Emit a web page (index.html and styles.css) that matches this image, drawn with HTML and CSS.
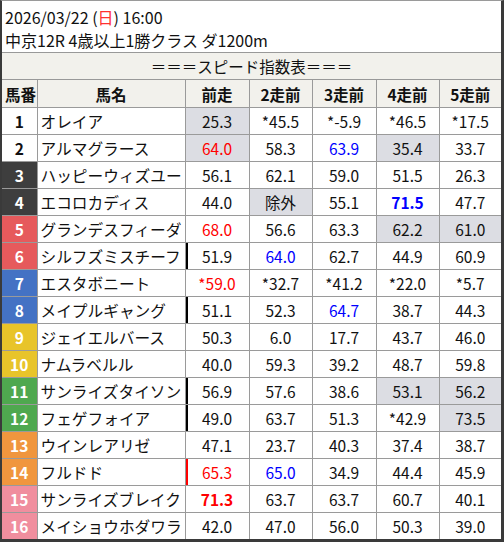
FILE: index.html
```html
<!DOCTYPE html>
<html lang="ja">
<head>
<meta charset="utf-8">
<link rel="stylesheet" href="styles.css">
</head>
<body>
<div class="frame">
  <div class="info">
    <div class="line">2026/03/22 (<span class="sun">日</span>) 16:00</div>
    <div class="line">中京12R 4歳以上1勝クラス ダ1200m</div>
  </div>
  <div class="title">＝＝＝スピード指数表＝＝＝</div>
  <table class="tbl">
    <colgroup>
      <col class="c-no"><col class="c-name"><col class="c-v0"><col class="c-v1"><col class="c-v2"><col class="c-v3"><col class="c-v4">
    </colgroup>
    <thead>
      <tr><th class="h-no">馬番</th><th>馬名</th><th>前走</th><th>2走前</th><th>3走前</th><th>4走前</th><th>5走前</th></tr>
    </thead>
    <tbody>
      <tr><td class="no w1">1</td><td class="nm">オレイア</td><td class="g">25.3</td><td>*45.5</td><td>*-5.9</td><td>*46.5</td><td>*17.5</td></tr>
      <tr><td class="no w2">2</td><td class="nm">アルマグラース</td><td class="g red">64.0</td><td>58.3</td><td class="blue">63.9</td><td class="g">35.4</td><td>33.7</td></tr>
      <tr><td class="no k">3</td><td class="nm">ハッピーウィズユー</td><td>56.1</td><td>62.1</td><td>59.0</td><td>51.5</td><td>26.3</td></tr>
      <tr><td class="no k">4</td><td class="nm">エコロカディス</td><td>44.0</td><td class="g">除外</td><td>55.1</td><td class="blue b">71.5</td><td>47.7</td></tr>
      <tr><td class="no r">5</td><td class="nm">グランデスフィーダ</td><td class="red">68.0</td><td>56.6</td><td>63.3</td><td class="g">62.2</td><td class="g">61.0</td></tr>
      <tr><td class="no r">6</td><td class="nm">シルフズミスチーフ</td><td class="bar">51.9</td><td class="blue">64.0</td><td>62.7</td><td>44.9</td><td>60.9</td></tr>
      <tr><td class="no bl">7</td><td class="nm">エスタボニート</td><td class="red">*59.0</td><td>*32.7</td><td>*41.2</td><td>*22.0</td><td>*5.7</td></tr>
      <tr><td class="no bl">8</td><td class="nm">メイプルギャング</td><td class="bar">51.1</td><td>52.3</td><td class="blue">64.7</td><td>38.7</td><td>44.3</td></tr>
      <tr><td class="no y">9</td><td class="nm">ジェイエルバース</td><td>50.3</td><td>6.0</td><td>17.7</td><td>43.7</td><td>46.0</td></tr>
      <tr><td class="no y">10</td><td class="nm">ナムラベルル</td><td>40.0</td><td>59.3</td><td>39.2</td><td>48.7</td><td>59.8</td></tr>
      <tr><td class="no gr">11</td><td class="nm">サンライズタイソン</td><td class="bar">56.9</td><td>57.6</td><td>38.6</td><td class="g">53.1</td><td class="g">56.2</td></tr>
      <tr><td class="no gr">12</td><td class="nm">フェゲフォイア</td><td class="bar">49.0</td><td>63.7</td><td>51.3</td><td>*42.9</td><td class="g">73.5</td></tr>
      <tr><td class="no o">13</td><td class="nm">ウインレアリゼ</td><td>47.1</td><td>23.7</td><td>40.3</td><td>37.4</td><td>38.7</td></tr>
      <tr><td class="no o">14</td><td class="nm">フルドド</td><td class="rbar red">65.3</td><td class="blue">65.0</td><td>34.9</td><td>44.4</td><td>45.9</td></tr>
      <tr><td class="no p">15</td><td class="nm">サンライズブレイク</td><td class="red b">71.3</td><td>63.7</td><td>63.7</td><td>60.7</td><td>40.1</td></tr>
      <tr><td class="no p">16</td><td class="nm">メイショウホダワラ</td><td>42.0</td><td>47.0</td><td>56.0</td><td>50.3</td><td>39.0</td></tr>
    </tbody>
  </table>
</div>
</body>
</html>
```

FILE: styles.css
```css
html, body {
  margin: 0;
  padding: 0;
  background: #ffffff;
}
body {
  font-family: "Noto Sans CJK JP", "Noto Sans", sans-serif;
  font-size: 15.5px;
  color: #111;
}
.frame {
  width: 504px;
  height: 542px;
  box-sizing: border-box;
  border-top: 1px solid #9a9a9a;
  border-left: 2px solid #3a3a3a;
  border-right: 3px solid #3a3a3a;
  border-bottom: 3px solid #3a3a3a;
  overflow: hidden;
}
.info {
  padding: 5px 0 0 3px;
  height: 52px;
  box-sizing: border-box;
  border-bottom: 1px solid #999;
  font-size: 16px;
}
.line {
  line-height: 23px;
  white-space: nowrap;
}
.sun {
  color: #ff3030;
}
.title {
  height: 26px;
  line-height: 26px;
  text-align: center;
  background: #f2f1ec;
  border-bottom: 1px solid #999;
}
.tbl {
  width: 499px;
  table-layout: fixed;
  border-collapse: collapse;
  border-style: hidden;
}
.c-no { width: 35px; }
.c-name { width: 148px; }
.c-v0 { width: 64px; }
.c-v1 { width: 63px; }
.c-v2 { width: 64px; }
.c-v3 { width: 63px; }
.c-v4 { width: 62px; }
.tbl th, .tbl td {
  border: 1px solid #9a9a9a;
  padding: 0;
  text-align: center;
  white-space: nowrap;
  overflow: hidden;
}
.tbl th {
  height: 27px;
  background: #f2f1ec;
  font-weight: bold;
}
.tbl td {
  height: 26px;
}
.tbl .h-no {
  text-align: left;
  padding-left: 3px;
}
.tbl td.nm {
  text-align: left;
  padding-left: 3px;
  font-size: 15.7px;
}
.tbl td.no {
  font-weight: bold;
  color: #fff;
}
.tbl td.w1, .tbl td.w2 { color: #111; background: #fff; }
.tbl td.k { background: #3e3e3e; }
.tbl td.r { background: #e65a5c; }
.tbl td.bl { background: #4472c4; }
.tbl td.y { background: #e8c42a; }
.tbl td.gr { background: #4fa84f; }
.tbl td.o { background: #f0963e; }
.tbl td.p { background: #f08e9e; }
.tbl td.g { background: #dcdde3; }
.red { color: #ff0000; }
.blue { color: #0000ff; }
.b { font-weight: bold; }
.tbl td.bar { box-shadow: inset 2px 0 0 #000; }
.tbl td.rbar { box-shadow: inset 2px 0 0 #ff0000; }
```
